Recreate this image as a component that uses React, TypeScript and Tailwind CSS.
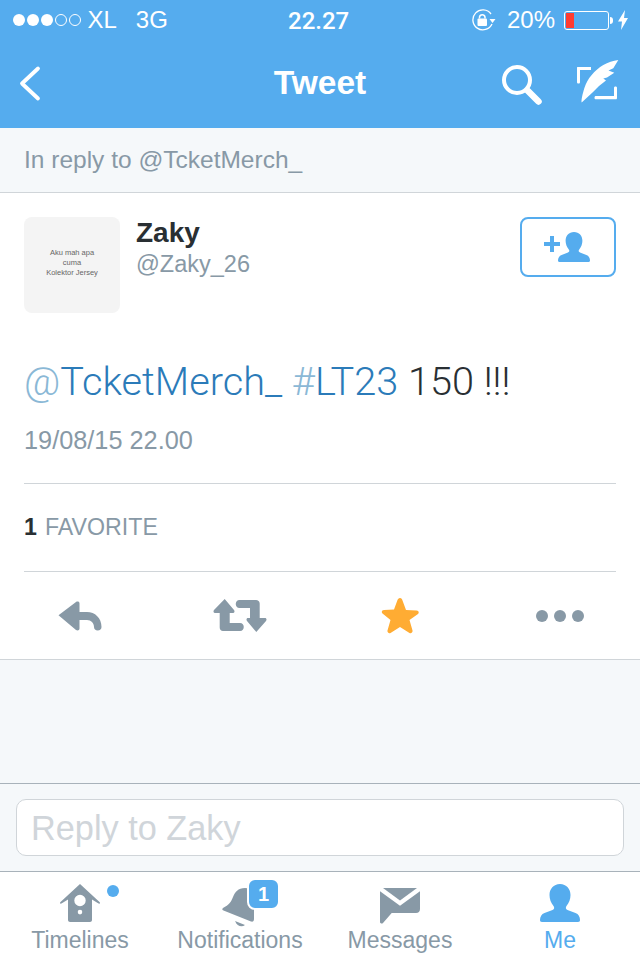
import React from 'react';

const FONT = "font-['Liberation_Sans',Arial,sans-serif]";

const PERSON_PATH = 'M20 0c6.500 0 10.500 5 10.500 11 0 4-1.500 8-4 11-1 1.500-1 3 1 4l8 3c3 1 4.500 4 4.500 7 0 1-.5 2-2 2H2c-1.500 0-2-1-2-2 0-3 1.500-6 4.500-7l8-3c2-1 2-2.500 1-4-2.500-3-4-7-4-11C9.500 5 13.500 0 20 0z';

const Signal: React.FC = () => (
    <div className="flex items-center gap-[2.500px] mr-[7px]">
        {[0, 1, 2].map((i) => (
            <span key={i} className="w-[11.500px] h-[11.500px] rounded-full bg-white" />
        ))}
        {[3, 4].map((i) => (
            <span key={i} className="w-[11.500px] h-[11.500px] rounded-full border border-white" />
        ))}
    </div>
);

const StatusBar: React.FC = () => (
    <div className="relative flex items-center h-10 pl-[13px] pr-[12px] text-white text-[24px] leading-none">
        <Signal />
        <span>XL</span>
        <span className="ml-[19px]">3G</span>
        <span className="absolute left-[288px] top-[9px] font-['Roboto',sans-serif] font-medium text-[24px]">22.27</span>
        <div className="ml-auto flex items-center">
            <svg viewBox="0 0 24 22" className="w-[24px] h-[22px] mr-[11px]" fill="none" stroke="currentColor">
                <path d="M19 5A10 10 0 1 0 20 15" strokeWidth="1.300" />
                <path d="M17.500 10h6l-3 4z" fill="currentColor" stroke="none" />
                <rect x="5.500" y="9.500" width="9.500" height="7.500" rx="1" fill="currentColor" stroke="none" />
                <path d="M7.500 9.500V8a2.800 2.800 0 0 1 5.500 0v1.500" strokeWidth="1.500" />
            </svg>
            <span className="mr-[9px] text-[24px]">20%</span>
            <div className="w-[45px] h-[19px] rounded-[3px] border border-white p-[1px]">
                <div className="w-[8px] h-full bg-[#ff3b30]" />
            </div>
            <span className="ml-[1px] w-[3px] h-[7px] bg-white rounded-r-sm mr-[5px]" />
            <svg viewBox="0 0 10 20" className="w-[10px] h-[20px]" fill="currentColor">
                <path d="M7 0 0 11.500h4L3 20l7-12H6z" />
            </svg>
        </div>
    </div>
);

const NavBar: React.FC = () => (
    <div className="relative flex items-center h-[88px] pb-[2px] text-white">
        <svg viewBox="0 0 24 38" className="absolute left-[18px] top-[25px] w-[24px] h-[38px]" fill="none" stroke="currentColor" strokeWidth="3.800" strokeLinecap="round" strokeLinejoin="round">
            <path d="M20 3.500 4 18.500 20 33.500" />
        </svg>
        <h1 className="w-full text-center text-[33.500px] font-bold leading-none">Tweet</h1>
        <svg viewBox="0 0 42 42" className="absolute left-[501px] top-[24px] w-[42px] h-[42px]" fill="none" stroke="currentColor">
            <circle cx="16" cy="16" r="13" strokeWidth="4" />
            <path d="M27 27 37.500 37.500" strokeWidth="6.500" strokeLinecap="round" />
        </svg>
        <svg viewBox="0 0 44 46" className="absolute left-[575px] top-[19px] w-[44px] h-[46px]" fill="currentColor">
            <path d="M2.500 8H16v3H5v12c0 1-.5 1.500-1.500 1.500S2 24 2 23V8.500c0-.3.2-.5.5-.5z" />
            <path d="M21 37h18v-8c0-1 .5-1.500 1.500-1.500S42 28 42 29v10c0 .8-.5 1.300-1 1.300H21c-1 0-1.500-.6-1.500-1.600S20 37 21 37z" />
            <path d="M43.300 1 38.300 9.300 33.500 11.500 39.300 13.700 32 18.500 28.300 19.500 31 21.500 24 27 18.300 32.700 6.700 43.500C6 42 7.500 35 9.300 29.300 11 24 13.500 19.500 16.700 16 20 12 24 8.500 28.300 6 33 3.500 38 1.800 43.300 1z" />
        </svg>
    </div>
);

const Actions: React.FC = () => (
    <div className="flex items-center h-[87px] text-[#8899a6]">
        <svg viewBox="0 0 45 30" className="ml-[34px] w-[45px] h-[30px]" fill="currentColor">
            <path d="M18 1 .5 14.300 18 29c1.500 1 3.500.5 3.500-1.500V19H29c4 0 7 3 7 7 0 2 1.500 3.500 3.700 3.500 2.300 0 3.800-1.500 3.800-3.500 0-9-6.500-15-14.500-15h-7.500V2.500C21.500.5 19.500 0 18 1z" />
        </svg>
        <svg viewBox="0 0 54 33" className="ml-[110px] w-[54px] h-[33px]" fill="currentColor">
            <path d="M11.700 0 21 11c1 1.500.5 3-1 3h-3.300v10H27c5 0 5 8 0 8H10c-2 0-3.300-1.500-3.300-3.500V14H2c-1.500 0-2-1.500-1-3z" />
            <path d="M43.300 33 34 22c-1-1.500-.5-3 1-3h2V9H26.500c-5 0-5-8 0-8H43c2 0 3.700 1.500 3.700 3.500V19H52c1.500 0 2 1.500 1 3z" />
        </svg>
        <svg viewBox="0 0 38 37" className="ml-[114px] w-[38px] h-[37px] text-[#ffac33]" fill="currentColor">
            <path d="M19 1c1.500 0 2 1 2.500 2.500l3.500 9.500 10.500.5c2 0 3 2 1.500 3.500L28.500 23l3 10.500c.5 2-1.500 3.500-3 2.500L19 30l-9.500 6c-1.500 1-3.500-.5-3-2.500L9.500 23 1.500 16.500C0 15 1 13 3 13l10-.5 3.500-9.500C17 2 17.500 1 19 1z" />
        </svg>
        <div className="ml-[117px] flex gap-[6px]">
            <span className="w-3 h-3 rounded-full bg-[#8899a6]" />
            <span className="w-3 h-3 rounded-full bg-[#8899a6]" />
            <span className="w-3 h-3 rounded-full bg-[#8899a6]" />
        </div>
    </div>
);

const Tab: React.FC<{ label: string; active?: boolean; children: React.ReactNode }> = ({ label, active, children }) => (
    <div className={`relative flex-1 flex flex-col items-center ${active ? 'text-[#55acee]' : 'text-[#8899a6]'}`}>
        <div className="relative h-[43px] w-full flex justify-center">{children}</div>
        <span className="text-[23px] leading-[26px]">{label}</span>
    </div>
);

const TabBar: React.FC = () => (
    <div className="flex h-[88px] pt-[12px] bg-white">
        <Tab label="Timelines">
            <svg viewBox="0 0 40 38" className="w-[40px] h-[38px]" fill="currentColor" fillRule="evenodd">
                <path d="M20 0 39.500 18c1 1 .5 2-1 1.500L32 15.500V36c0 1-1 2-2 2H10c-1 0-2-1-2-2V15.500L1.500 19.500c-1.500.5-2-.5-1-1.500zM20 10.800a5.700 5.700 0 1 0 0 11.400 5.700 5.700 0 0 0 0-11.400zm0 15a2.300 2.300 0 1 0 0 4.600 2.300 2.300 0 0 0 0-4.600z" />
            </svg>
            <span className="absolute left-[107px] top-[1px] w-3 h-3 rounded-full bg-[#55acee]" />
        </Tab>
        <Tab label="Notifications">
            <svg viewBox="0 0 34 40" className="absolute left-[62px] top-[4px] w-[34px] h-[40px]" fill="currentColor">
                <path d="M23 0C16 0 13 4 11 9 9 14 7 17 1 20c-1 1-1 2 .5 2.500L29 33.500c2 .5 3-.5 3-2.500V4c-3-2.500-6-4-9-4z" />
                <path d="M13 33l10 4c-3 2.500-8 1.500-10-4z" />
            </svg>
            <span className="absolute left-[87px] top-[-6px] w-[33px] h-[32px] rounded-lg border-2 border-white bg-[#55acee] text-white text-[20px] font-bold leading-[28px] text-center">1</span>
        </Tab>
        <Tab label="Messages">
            <svg viewBox="0 0 40 36" className="w-[40px] h-[36px] mt-[4px]" fill="currentColor">
                <path d="M3 0h34L20 12.500z" />
                <path d="M0 3.300 20 17.700 40 3.300V21c0 2.500-1.500 4-4 4H11.700L3 35c-1 1-3 .5-3-1z" />
            </svg>
        </Tab>
        <Tab label="Me" active>
            <svg viewBox="0 0 40 38" className="w-[40px] h-[38px]" fill="currentColor">
                <path d={PERSON_PATH} />
            </svg>
        </Tab>
    </div>
);

export default function App() {
    return (
        <div className={`${FONT} w-[640px] h-[960px] flex flex-col overflow-hidden bg-[#f5f8fa]`}>
            <header className="bg-[#55acee]">
                <StatusBar />
                <NavBar />
            </header>

            <div className="h-[65px] pl-6 flex items-center border-b border-[#d0d5d9] text-[#8899a6] text-[24.500px]">
                In reply to @TcketMerch_
            </div>

            <main className="h-[467px] bg-white border-b border-[#d0d5d9] px-6">
                <div className="flex pt-6">
                    <div className="w-[96px] h-[96px] pb-[4px] rounded-lg bg-[#f4f4f4] flex flex-col items-center justify-center text-[7.500px] leading-[10px] text-[#666]">
                        <span>Aku mah apa</span>
                        <span>cuma</span>
                        <span>Kolektor Jersey</span>
                    </div>
                    <div className="ml-4 flex-1">
                        <div className="mt-[1px] text-[28px] leading-[30px] font-bold text-[#292f33]">Zaky</div>
                        <div className="mt-[1px] text-[23.500px] leading-[30px] text-[#8899a6]">@Zaky_26</div>
                    </div>
                    <div className="w-[96px] h-[60px] rounded-lg border-2 border-[#55acee] flex items-center justify-center text-[#55acee]">
                        <svg viewBox="0 0 46 30" className="w-[46px] h-[30px] mr-[2px]" fill="currentColor">
                            <path d="M6 4h4v6h6v4h-6v6H6v-6H0v-4h6z" />
                            <path d={PERSON_PATH} transform="translate(14 0) scale(.8 .79)" />
                        </svg>
                    </div>
                </div>

                <p className="mt-[45px] font-['Roboto',sans-serif] font-light text-[39.700px] leading-[48px] text-[#292f33] whitespace-nowrap">
                    <span className="text-[#8ab8d6]">@</span>
                    <span className="text-[#2b7bb9]">TcketMerch_</span>{' '}
                    <span className="text-[#8ab8d6]">#</span>
                    <span className="text-[#2b7bb9]">LT23</span> 150 !!!
                </p>
                <div className="mt-[20px] text-[25.300px] leading-[28px] text-[#8899a6]">19/08/15 22.00</div>

                <div className="mt-[29px] h-[89px] border-y border-[#d0d5d9] flex items-center text-[23.200px] text-[#8899a6]">
                    <span className="font-bold text-[#292f33] mr-[8px]">1</span>FAVORITE
                </div>
                <Actions />
            </main>

            <div className="flex-1" />

            <div className="h-[89px] border-y border-[#a8b2ba] px-4 flex items-center pb-[1px]">
                <div className="w-full h-[57px] rounded-[10px] border border-[#d0d5d9] bg-white pl-[14px] pt-[4px] flex items-center text-[34.300px] text-[#d0d5da]">
                    Reply to Zaky
                </div>
            </div>

            <TabBar />
        </div>
    );
}
